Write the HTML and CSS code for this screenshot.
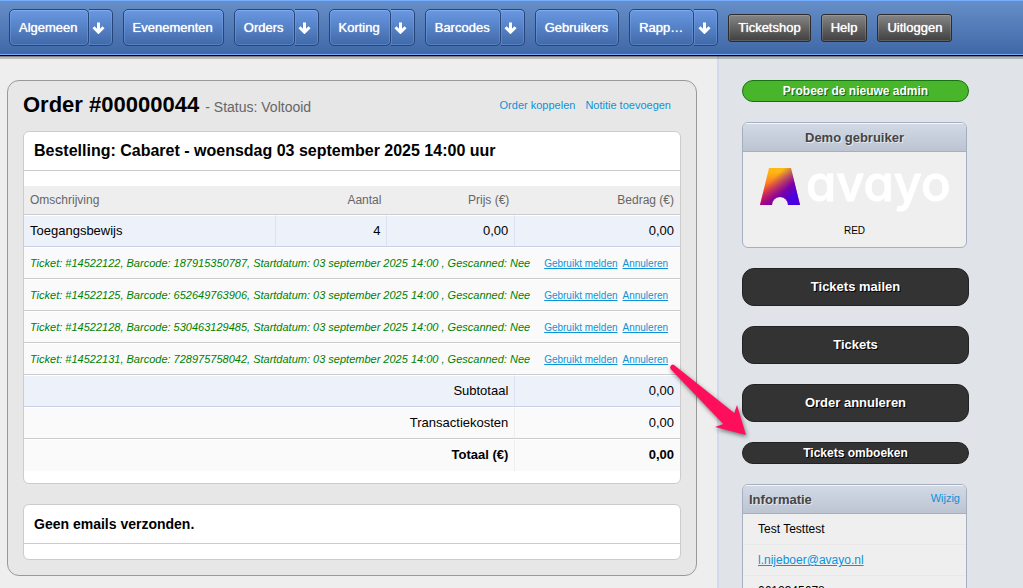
FILE: index.html
```html
<!DOCTYPE html>
<html lang="nl">
<head>
<meta charset="utf-8">
<title>Order #00000044</title>
<link rel="stylesheet" href="styles.css">
</head>
<body>
<svg class="symbols" aria-hidden="true">
  <symbol id="arrow-down" viewBox="0 0 13 12">
    <path d="M6.5 0.5V10M1.5 5.2L6.5 10.2L11.5 5.2" fill="none" stroke="#fff" stroke-width="3"/>
  </symbol>
</svg>
<header class="topbar">
  <nav class="nav">
    <div class="nav-group"><button class="nav-btn">Algemeen</button><button class="nav-more" aria-label="Meer Algemeen"><svg class="arrow"><use href="#arrow-down"/></svg></button></div>
    <div class="nav-group"><button class="nav-btn">Evenementen</button></div>
    <div class="nav-group"><button class="nav-btn">Orders</button><button class="nav-more" aria-label="Meer Orders"><svg class="arrow"><use href="#arrow-down"/></svg></button></div>
    <div class="nav-group"><button class="nav-btn">Korting</button><button class="nav-more" aria-label="Meer Korting"><svg class="arrow"><use href="#arrow-down"/></svg></button></div>
    <div class="nav-group"><button class="nav-btn">Barcodes</button><button class="nav-more" aria-label="Meer Barcodes"><svg class="arrow"><use href="#arrow-down"/></svg></button></div>
    <div class="nav-group"><button class="nav-btn">Gebruikers</button></div>
    <div class="nav-group"><button class="nav-btn">Rapp…</button><button class="nav-more" aria-label="Meer Rapportages"><svg class="arrow"><use href="#arrow-down"/></svg></button></div>
    <button class="util-btn">Ticketshop</button>
    <button class="util-btn">Help</button>
    <button class="util-btn">Uitloggen</button>
  </nav>
</header>
<div class="page">
  <main class="main">
    <section class="order">
      <div class="order-head">
        <h1 class="order-title">Order #00000044 <span class="order-status">- Status: Voltooid</span></h1>
        <div class="order-links"><a href="#">Order koppelen</a><a href="#">Notitie toevoegen</a></div>
      </div>
      <div class="box">
        <h2 class="box-title">Bestelling: Cabaret - woensdag 03 september 2025 14:00 uur</h2>
        <table class="lines">
          <colgroup><col class="col-desc"><col class="col-count"><col class="col-price"><col class="col-amount"></colgroup>
          <thead>
            <tr><th class="left">Omschrijving</th><th>Aantal</th><th>Prijs (€)</th><th>Bedrag (€)</th></tr>
          </thead>
          <tbody>
            <tr class="shade"><td class="left">Toegangsbewijs</td><td>4</td><td>0,00</td><td>0,00</td></tr>
            <tr><td class="ticket" colspan="4"><div class="ticket-row"><em>Ticket: #14522122, Barcode: 187915350787, Startdatum: 03 september 2025 14:00 , Gescanned: Nee</em><span class="ticket-links"><a href="#">Gebruikt melden</a><a href="#">Annuleren</a></span></div></td></tr>
            <tr><td class="ticket" colspan="4"><div class="ticket-row"><em>Ticket: #14522125, Barcode: 652649763906, Startdatum: 03 september 2025 14:00 , Gescanned: Nee</em><span class="ticket-links"><a href="#">Gebruikt melden</a><a href="#">Annuleren</a></span></div></td></tr>
            <tr><td class="ticket" colspan="4"><div class="ticket-row"><em>Ticket: #14522128, Barcode: 530463129485, Startdatum: 03 september 2025 14:00 , Gescanned: Nee</em><span class="ticket-links"><a href="#">Gebruikt melden</a><a href="#">Annuleren</a></span></div></td></tr>
            <tr><td class="ticket" colspan="4"><div class="ticket-row"><em>Ticket: #14522131, Barcode: 728975758042, Startdatum: 03 september 2025 14:00 , Gescanned: Nee</em><span class="ticket-links"><a href="#">Gebruikt melden</a><a href="#">Annuleren</a></span></div></td></tr>
            <tr class="shade"><td colspan="3">Subtotaal</td><td>0,00</td></tr>
            <tr><td colspan="3">Transactiekosten</td><td>0,00</td></tr>
            <tr class="total"><td colspan="3">Totaal (€)</td><td>0,00</td></tr>
          </tbody>
        </table>
      </div>
      <div class="box">
        <h2 class="box-title small">Geen emails verzonden.</h2>
      </div>
    </section>
  </main>
  <aside class="side">
    <button class="side-btn slim green">Probeer de nieuwe admin</button>
    <section class="card">
      <h3 class="card-head center">Demo gebruiker</h3>
      <div class="brand">
        <svg class="logo" viewBox="0 0 192 48" role="img" aria-label="avayo">
          <defs>
            <linearGradient id="warm" x1="0" y1="0" x2="0" y2="1"><stop offset="0.1" stop-color="#fdb913"/><stop offset="0.95" stop-color="#ff1035"/></linearGradient>
            <linearGradient id="cool" x1="0.35" y1="0.25" x2="0.85" y2="0.75"><stop offset="0" stop-color="#7a00a8" stop-opacity="0"/><stop offset="0.65" stop-color="#7a00a8"/><stop offset="1" stop-color="#4a00e0"/></linearGradient>
          </defs>
          <path d="M11 5H33L42 42H30A8 8 0 0 0 14 42H2Z" fill="url(#warm)"/>
          <path d="M11 5H33L42 42H30A8 8 0 0 0 14 42H2Z" fill="url(#cool)"/>
          <text class="logo-word" x="48" y="38">avayo</text>
        </svg>
        <p class="brand-name">RED</p>
      </div>
    </section>
    <button class="side-btn">Tickets mailen</button>
    <button class="side-btn">Tickets</button>
    <button class="side-btn">Order annuleren</button>
    <button class="side-btn slim">Tickets omboeken</button>
    <section class="card">
      <div class="card-head"><h3 class="card-title">Informatie</h3><a class="edit" href="#">Wijzig</a></div>
      <ul class="info">
        <li>Test Testtest</li>
        <li><a href="#">l.nijeboer@avayo.nl</a></li>
        <li>0612345678</li>
      </ul>
    </section>
  </aside>
</div>
<svg class="pointer" viewBox="0 0 90 84" aria-hidden="true">
  <path d="M6.500 6Q4 8 6 10.500L58.300 65L50 68L81 76L72 46L69.300 54L9 6Q8 5 6.500 6Z" fill="#ff0f5b"/>
</svg>
</body>
</html>
```
FILE: styles.css
```css
* { box-sizing: border-box; }
html { overflow: hidden; }
body { margin: 0; min-height: 100vh; display: flex; flex-direction: column; position: relative; background: #eee; color: #000; font-family: "Liberation Sans", Arial, sans-serif; font-size: 13px; }
button { font-family: inherit; cursor: pointer; }
h1, h2, h3, p, ul { margin: 0; padding: 0; }
a { color: #0c93d8; }
.symbols { display: none; }

.topbar { background: linear-gradient(#668fc8, #3f67a6); border-top: 1px solid #77adff; border-bottom: 1px solid #000; box-shadow: inset 0 -1px #77adff, 0 3px rgba(0, 0, 0, .22), 0 1px rgba(0, 0, 0, .3); padding: 8px 9px; position: relative; }
.nav { display: flex; align-items: center; gap: 10px; height: 38px; padding-bottom: 1px; }
.nav-group { display: flex; }
.nav-btn, .nav-more { height: 37px; border: 1px solid #25457b; border-radius: 5px; background: linear-gradient(#6999e3, #4169a8); box-shadow: inset 0 1px #82acec, inset 0 0 0 1px rgba(130, 172, 236, .35); color: #fff; font-size: 13px; text-shadow: 0 0 1px #fff; padding: 0 10px 0 9px; }
.nav-more { width: 24px; padding: 0 3px 0 0; border-left-width: 0; border-radius: 0 5px 5px 0; display: flex; align-items: center; justify-content: center; }
.arrow { width: 13px; height: 12px; flex: none; }
.util-btn { height: 28px; padding: 0 9px; border: 1px solid #2c2c2c; border-radius: 3px; background: linear-gradient(#858585, #404040); box-shadow: inset 0 0 0 1px rgba(255, 255, 255, .15); color: #fff; font-size: 13px; text-shadow: 0 0 1px #fff; }

.page { flex: 1; display: flex; }
.main { flex: 1; min-width: 0; padding: 24px 20px 12px 7px; }
.order { background: #e7e7e7; border: 1px solid #999; border-radius: 12px; padding: 9px 15px 15px; }
.order-head { display: flex; justify-content: space-between; align-items: center; height: 41px; padding: 0 10px 9px 0; }
.order-title { font-size: 22px; line-height: 30px; }
.order-status { font-size: 14px; font-weight: normal; color: #666; }
.order-links { display: flex; gap: 10px; font-size: 11px; padding-bottom: 2px; }
.order-links a, .edit { text-decoration: none; }
.box { background: #fff; border: 1px solid #ccc; border-radius: 6px; padding-bottom: 12px; overflow: hidden; }
.box + .box { margin-top: 20px; padding-bottom: 15px; }
.box-title { font-size: 16px; line-height: 38px; padding: 0 10px; border-bottom: 1px solid #ccc; }
.small { font-size: 14px; }
.lines { width: 100%; margin-top: 15px; table-layout: fixed; border-collapse: separate; border-spacing: 0; }
.col-desc { width: 38.4%; }
.col-count { width: 17%; }
.col-price { width: 19.5%; }
.lines th { height: 29px; padding: 0 6px; background: #eee; border-bottom: 1px solid #ccc; color: #666; font-size: 12px; font-weight: normal; text-align: right; }
.lines td { height: 32px; padding: 0 6px 2px; background: #fafafa; border-top: 1px solid #fff; border-bottom: 1px solid #ccc; border-right: 1px solid #eee; text-align: right; }
.lines td:last-child { border-right: 0; }
.lines .left { text-align: left; }
.lines .ticket { padding-bottom: 0; }
.lines .shade td { background: #ecf1fa; border-bottom-color: #c8d1e6; border-right-color: #dbe2f0; }
.lines .total td { font-weight: bold; border-bottom: 0; }
.ticket-row { display: flex; align-items: center; gap: 14px; color: green; font-size: 11px; white-space: nowrap; }
.ticket-links { display: flex; gap: 5px; font-size: 10px; }

.side { width: 306px; flex: none; padding: 24px 54px 0 23px; background: #e0e4e9; border-left: 2px solid #d0daea; }
.side-btn { display: block; width: 100%; height: 38px; margin-bottom: 20px; padding: 0 0 2px; border: 1px solid #222; border-radius: 12px; background: #333; color: #fff; font-size: 13px; font-weight: bold; text-shadow: 1px 1px #000; }
.slim { height: 22px; padding: 0; font-size: 12px; }
.green { background: #49b52b; border-color: #14740f; text-shadow: 1px 1px #14600f; }
.card { margin: 0 2px 20px 0; border: 1px solid #a5afbf; border-radius: 6px; background: #efefef; overflow: hidden; }
.card-head { display: flex; justify-content: space-between; align-items: center; height: 29px; padding: 0 6px; border-bottom: 1px solid #a5afbf; background: linear-gradient(#d3dae6, #bcc4d2); box-shadow: inset 0 1px #f2f5fa; color: #444; font-size: 13px; text-shadow: 1px 1px #e3e8f0; }
.center { justify-content: center; }
.card-title { font-size: 13px; }
.edit { font-size: 11px; padding-bottom: 2px; text-shadow: none; }
.brand { height: 95px; padding: 11px 15px 0; text-align: center; }
.logo { display: block; width: 192px; height: 48px; overflow: visible; }
.logo-word { font-family: Inter, sans-serif; font-size: 49px; font-weight: 500; font-feature-settings: "cv11"; fill: #fff; stroke: #fff; stroke-width: 1px; }
.brand-name { margin-top: 14px; font-size: 10px; line-height: 12px; }
.info { list-style: none; font-size: 12px; }
.info li { padding: 0 15px; line-height: 30px; border-bottom: 1px solid #e8e8e8; }

/* Callout from the ticket rows to the rebooking button */
.pointer { position: absolute; left: 665px; top: 359px; width: 90px; height: 84px; filter: drop-shadow(1px 2px 2px rgba(0, 0, 0, .5)); pointer-events: none; }
```
